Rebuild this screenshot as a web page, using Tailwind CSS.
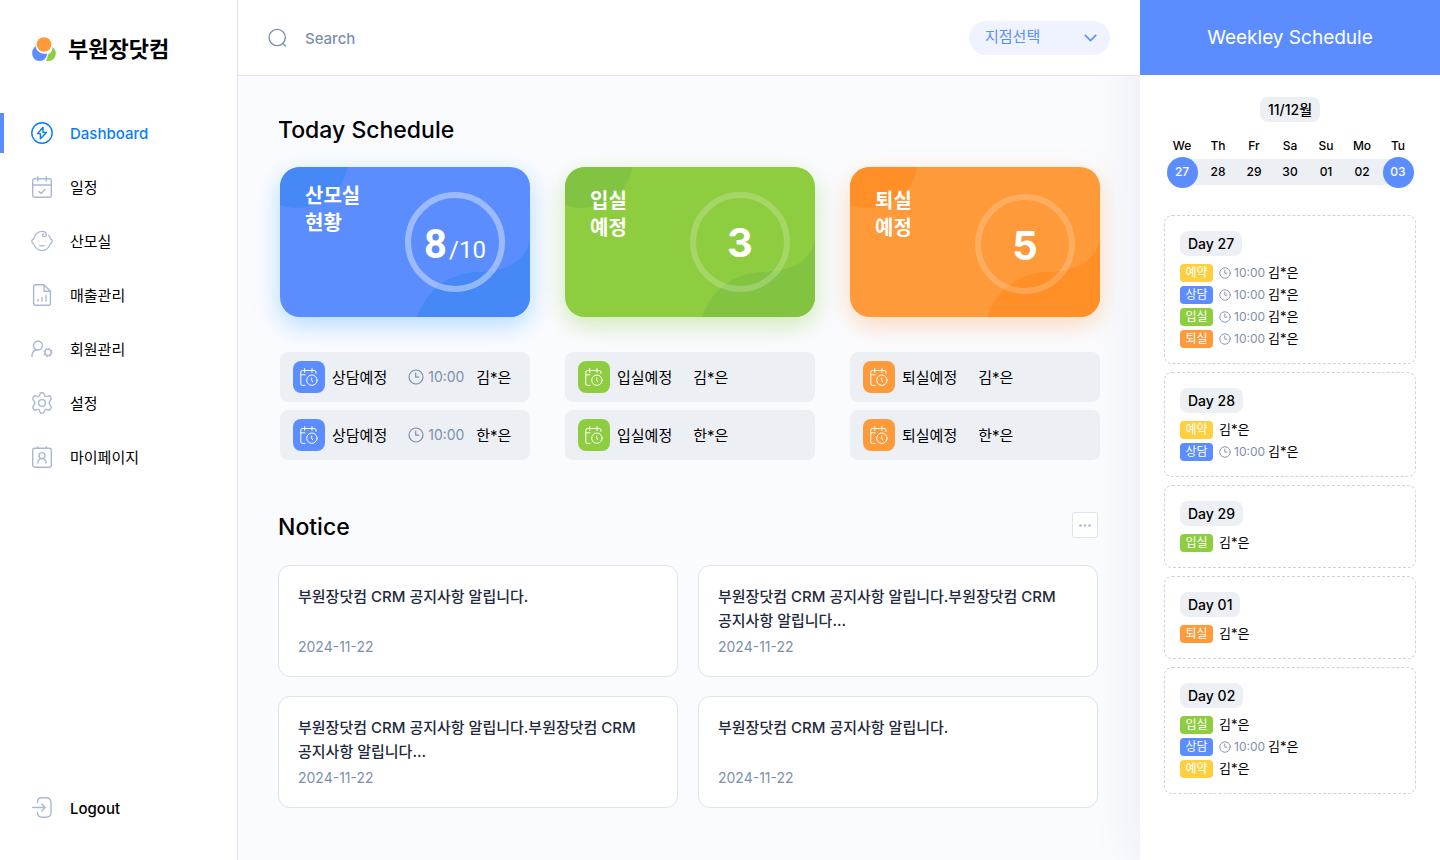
<!DOCTYPE html>
<html lang="ko">
<head>
<meta charset="utf-8">
<meta name="viewport" content="width=device-width, initial-scale=1">
<title>부원장닷컴</title>
<script src="https://cdn.jsdelivr.net/npm/@tailwindcss/browser@4"></script>
</head>
<body class="bg-white font-['Inter','Noto_Sans_CJK_KR',sans-serif] text-black antialiased">
<svg class="hidden" aria-hidden="true">
  <symbol id="clock" viewBox="0 0 16 16" fill="none" stroke="currentColor" stroke-width="1.2" stroke-linecap="round" stroke-linejoin="round"><circle cx="8" cy="8" r="7"/><path d="M7.700 4v4.200h3"/></symbol>
  <symbol id="calclock" viewBox="0 0 18 18" fill="none" stroke="currentColor" stroke-linecap="round" stroke-linejoin="round"><path d="M5 17.400H2.300Q.8 17.400 .8 15.900V4Q.8 2.500 2.300 2.500H14.200Q16 2.500 16 4V5.500M.8 6.800H5M4.700.6V4.300M12 .6V4.300"/><circle cx="11.900" cy="12.200" r="5.200"/><path d="M11.700 10v2.200l.9 1.600"/></symbol>
  <symbol id="blob" viewBox="0 0 250 150" preserveAspectRatio="none"><path fill="currentColor" d="M0 0H67C65 22 44 41 15 41Q7 41 0 38ZM137 150C146 124 168 105 200 105C204 105 206 104 211 104C236 101 250 86 250 68V150Z"/></symbol>
</svg>

<div class="flex min-h-screen">
  <aside class="flex w-[238px] shrink-0 flex-col border-r border-[#dfe3ee] pb-8">
    <a href="#" class="mt-[29px] flex h-10 items-center gap-3 pl-8">
      <svg class="size-6" viewBox="0 0 24 24" aria-hidden="true"><path d="M20.600 10.200C23 12 24 14.500 23.800 16.800C23.400 21 20.500 24 16.500 24Q15 24 14 23.400C15.400 21.500 15.800 19.500 15.800 17.500C18.400 16.600 20.400 14 20.600 10.200Z" fill="#8fcd40"/><path d="M3.700 9C.6 11.500 0 14 .2 17C.6 21 3.500 24 7.500 24C11.700 24 15 21 15 16.500Q13.500 17 11.500 16.700C6.800 16 4 13 3.700 9Z" fill="#5b8dff"/><circle cx="12" cy="7.500" r="7.300" fill="#ff9a3a"/></svg>
      <span class="text-[22px] font-bold">부원장닷컴</span>
    </a>
    <nav class="mt-11 flex flex-1 flex-col gap-[14px] text-[15px]">
      <a href="#" class="flex h-10 items-center gap-[17px] border-l-4 border-[#5b8dff] pl-[27px] font-medium text-[#0a7cff]">
        <svg class="size-[22px]" viewBox="0 0 22 22" fill="none" stroke="currentColor" stroke-width="1.400" stroke-linejoin="round"><circle cx="11" cy="11" r="10.200"/><path d="M12 5.200 6.600 11.600H9.400V16.800L15.400 10.400H12Z"/></svg><span class="pt-[2px]">Dashboard</span></a>
      <a href="#" class="flex h-10 items-center gap-[17px] pl-[31px]">
        <svg class="size-[22px] text-[#a9b9d4]" viewBox="0 0 22 22" fill="none" stroke="currentColor" stroke-width="1.400" stroke-linecap="round" stroke-linejoin="round"><rect x="1.700" y="2.700" width="18.600" height="18.600" rx="2"/><path d="M1.700 9H20.300M6.800.7V5M15.200.7V5M7.800 15.400l2.200 2 4-4"/></svg><span class="pt-[2px]">일정</span></a>
      <a href="#" class="flex h-10 items-center gap-[17px] pl-[31px]">
        <svg class="size-[22px] text-[#a9b9d4]" viewBox="0 0 22 22" fill="none" stroke="currentColor" stroke-width="1.300" stroke-linecap="round" stroke-linejoin="round"><path d="M17.600 5.200Q18.800 6.700 19.300 8.600Q21.300 9.700 21.300 11.300T19.300 13.900C17.800 18.200 14.600 20.600 11 20.600S4.200 18.200 2.700 13.900Q.7 12.900.7 11.300T2.700 8.600C4.200 4 7.300 1.400 11 1.400C16 1.200 16.600 6.800 13 6.800C10.700 6.800 10.700 4 12.700 4M8.800 15.400Q11 16.600 13.200 15.400"/><path d="M7.700 11.200v.1M14.300 11.200v.1" stroke-opacity=".6"/></svg><span class="pt-[2px]">산모실</span></a>
      <a href="#" class="flex h-10 items-center gap-[17px] pl-[31px]">
        <svg class="size-[22px] text-[#a9b9d4]" viewBox="0 0 22 22" fill="none" stroke="currentColor" stroke-width="1.400" stroke-linecap="round" stroke-linejoin="round"><path d="M13 .8H4.500Q2.600.8 2.600 2.700V19.300Q2.600 21.200 4.500 21.200H17.500Q19.400 21.200 19.400 19.300V7.200ZM13 .8V7.200H19.400M7 15.500V17M11 13.500V17M15 11.500V17"/></svg><span class="pt-[2px]">매출관리</span></a>
      <a href="#" class="flex h-10 items-center gap-[17px] pl-[31px]">
        <svg class="size-[22px] text-[#a9b9d4]" viewBox="0 0 22 22" fill="none" stroke="currentColor" stroke-width="1.400" stroke-linecap="round"><circle cx="7" cy="7.600" r="4.400"/><path d="M.9 18.500C1 14.500 3 12 6 12"/><circle cx="17" cy="14.500" r="3.100"/><circle cx="17" cy="14.500" r="4" stroke-width="1.200" stroke-dasharray="1.600 1.541" stroke-linecap="butt"/></svg><span class="pt-[2px]">회원관리</span></a>
      <a href="#" class="flex h-10 items-center gap-[17px] pl-[31px]">
        <svg class="size-[22px] text-[#a9b9d4]" viewBox="0 0 22 22" fill="none" stroke="currentColor" stroke-width="1.400" stroke-linejoin="round"><circle cx="11" cy="11" r="3.400"/><path d="M8.800 2.400Q9.100.8 10.500.8H11.500Q12.900.8 13.200 2.400Q13.500 4.400 15 4.600Q15.700 4.700 17 4Q18.400 3.300 19.200 4.500L20 5.900Q20.700 7.100 19.500 8.200C17.800 9.700 17.800 12.300 19.500 13.800Q20.700 14.900 20 16.100L19.200 17.500Q18.400 18.700 17 18Q15.700 17.300 15 17.400Q13.500 17.600 13.200 19.600Q12.900 21.200 11.500 21.200H10.500Q9.100 21.200 8.800 19.600Q8.500 17.600 7 17.400Q6.300 17.300 5 18Q3.600 18.700 2.800 17.500L2 16.100Q1.300 14.900 2.500 13.800C4.200 12.300 4.200 9.700 2.500 8.200Q1.300 7.100 2 5.900L2.800 4.500Q3.600 3.300 5 4Q6.300 4.700 7 4.600Q8.500 4.400 8.800 2.400Z"/></svg><span class="pt-[2px]">설정</span></a>
      <a href="#" class="flex h-10 items-center gap-[17px] pl-[31px]">
        <svg class="size-[22px] text-[#a9b9d4]" viewBox="0 0 22 22" fill="none" stroke="currentColor" stroke-width="1.400" stroke-linecap="round" stroke-linejoin="round"><rect x="1.700" y="2.200" width="18.600" height="19" rx="2"/><path d="M6.800.7V2.200M15.200.7V2.200M7 17C7 13.800 8.700 12.600 11 12.600S15 13.800 15 17"/><circle cx="11" cy="9.600" r="3"/></svg><span class="pt-[2px]">마이페이지</span></a>
    </nav>
    <a href="#" class="flex h-10 items-center gap-[17px] pl-[31px] text-[15px] font-medium">
      <svg class="size-[22px] text-[#a9b9d4]" viewBox="0 0 22 22" fill="none" stroke="currentColor" stroke-width="1.400" stroke-linecap="round" stroke-linejoin="round"><path d="M6.500 5.500Q6.500.8 11 .8H15Q20 .8 20 5.800V15.200Q20 20.200 15 20.200H11Q6.500 20.200 6.500 15.800M1.600 10.500H14M10.700 7l3.500 3.500-3.500 3.500"/></svg><span class="pt-[2px]">Logout</span></a>
  </aside>

  <div class="flex min-w-0 flex-1 flex-col bg-[#fafbff]">
    <header class="relative z-20 flex h-[76px] items-center justify-between border-b border-[#e1e3ea] bg-white px-[30px]">
      <label class="flex flex-1 items-center gap-[18px] text-[#7d8fad]">
        <svg class="size-5" viewBox="0 0 20 20" fill="none" stroke="currentColor" stroke-width="1.400" stroke-linecap="round" aria-hidden="true"><circle cx="9.700" cy="9.500" r="8.600"/><path d="m16 16 2.500 2.500"/></svg>
        <input type="search" aria-label="Search" placeholder="Search" class="h-10 w-full bg-transparent pt-[2px] text-[15px] font-medium outline-none placeholder:text-[#7d8fad]">
      </label>
      <div class="relative">
        <select aria-label="지점선택" class="h-[34px] w-[141px] appearance-none rounded-full bg-[#eff3ff] px-4 text-[15px] text-[#5b8dff]"><option>지점선택</option></select>
        <svg class="pointer-events-none absolute top-[13px] right-[13px] h-2 w-[13px] text-[#5b8dff]" viewBox="0 0 13 8" fill="none" stroke="currentColor" stroke-width="1.600"><path d="m.8.900 5.700 5.700L12.200.900"/></svg>
      </div>
    </header>

    <main class="px-10 pt-9 pb-12">
      <h1 class="text-[23px] leading-9 font-medium">Today Schedule</h1>
      <div class="mt-[19px] grid grid-cols-3 gap-[35px] pl-[2px]">
        <section class="flex flex-col gap-2">
          <div class="relative mb-[27px] flex h-[150px] justify-between overflow-hidden rounded-[20px] bg-[#5b8dff] px-[25px] text-white shadow-[0_8px_24px_rgba(70,170,255,0.4)]"><svg class="absolute inset-0 size-full text-[#4788f7]" aria-hidden="true"><use href="#blob"/></svg>
            <h2 class="relative pt-4 text-xl leading-[27px] font-bold">산모실<br>현황</h2>
            <div class="relative mt-[25px] flex size-[100px] items-baseline justify-center gap-[2px] rounded-full border-6 border-white/40 pt-[21px] font-[Roboto] text-[40px] leading-[52px] font-bold">8<span class="text-2xl font-normal">/10</span></div>
          </div>
          <div class="flex h-[50px] items-center rounded-lg bg-[#eceff4] px-[13px] text-[15px]">
            <span class="mr-[7px] flex size-8 items-center justify-center rounded-lg bg-[#5b8dff] text-white"><svg class="size-[18px]" aria-hidden="true"><use href="#calclock"/></svg></span>
            <span class="pt-[2px]">상담예정</span>
            <svg class="mr-1 ml-[21px] size-4 text-[#7d8fad]" aria-hidden="true"><use href="#clock"/></svg><time class="w-12 text-sm text-[#7d8fad]">10:00</time>
            <span class="pt-[2px]">김*은</span>
          </div>
          <div class="flex h-[50px] items-center rounded-lg bg-[#eceff4] px-[13px] text-[15px]">
            <span class="mr-[7px] flex size-8 items-center justify-center rounded-lg bg-[#5b8dff] text-white"><svg class="size-[18px]" aria-hidden="true"><use href="#calclock"/></svg></span>
            <span class="pt-[2px]">상담예정</span>
            <svg class="mr-1 ml-[21px] size-4 text-[#7d8fad]" aria-hidden="true"><use href="#clock"/></svg><time class="w-12 text-sm text-[#7d8fad]">10:00</time>
            <span class="pt-[2px]">한*은</span>
          </div>
        </section>
        <section class="flex flex-col gap-2">
          <div class="relative mb-[27px] flex h-[150px] justify-between overflow-hidden rounded-[20px] bg-[#8fcd40] px-[25px] text-white shadow-[0_8px_24px_rgba(143,205,64,0.4)]"><svg class="absolute inset-0 size-full text-[#82c341]" aria-hidden="true"><use href="#blob"/></svg>
            <h2 class="relative pt-[21px] text-xl leading-[27px] font-bold">입실<br>예정</h2>
            <div class="relative mt-[25px] flex size-[100px] items-baseline justify-center rounded-full border-6 border-white/20 pt-[19px] text-[40px] leading-[52px] font-bold">3</div>
          </div>
          <div class="flex h-[50px] items-center rounded-lg bg-[#eceff4] px-[13px] text-[15px]">
            <span class="mr-[7px] flex size-8 items-center justify-center rounded-lg bg-[#8fcd40] text-white"><svg class="size-[18px]" aria-hidden="true"><use href="#calclock"/></svg></span>
            <span class="mr-[21px] pt-[2px]">입실예정</span><span class="pt-[2px]">김*은</span>
          </div>
          <div class="flex h-[50px] items-center rounded-lg bg-[#eceff4] px-[13px] text-[15px]">
            <span class="mr-[7px] flex size-8 items-center justify-center rounded-lg bg-[#8fcd40] text-white"><svg class="size-[18px]" aria-hidden="true"><use href="#calclock"/></svg></span>
            <span class="mr-[21px] pt-[2px]">입실예정</span><span class="pt-[2px]">한*은</span>
          </div>
        </section>
        <section class="flex flex-col gap-2">
          <div class="relative mb-[27px] flex h-[150px] justify-between overflow-hidden rounded-[20px] bg-[#ff9a3a] px-[25px] text-white shadow-[0_8px_24px_rgba(255,154,58,0.35)]"><svg class="absolute inset-0 size-full text-[#ff8f26]" aria-hidden="true"><use href="#blob"/></svg>
            <h2 class="relative pt-[21px] text-xl leading-[27px] font-bold">퇴실<br>예정</h2>
            <div class="relative mt-[27px] flex size-[100px] items-baseline justify-center rounded-full border-6 border-white/20 pt-5 text-[40px] leading-[52px] font-bold">5</div>
          </div>
          <div class="flex h-[50px] items-center rounded-lg bg-[#eceff4] px-[13px] text-[15px]">
            <span class="mr-[7px] flex size-8 items-center justify-center rounded-lg bg-[#ff9a3a] text-white"><svg class="size-[18px]" aria-hidden="true"><use href="#calclock"/></svg></span>
            <span class="mr-[21px] pt-[2px]">퇴실예정</span><span class="pt-[2px]">김*은</span>
          </div>
          <div class="flex h-[50px] items-center rounded-lg bg-[#eceff4] px-[13px] text-[15px]">
            <span class="mr-[7px] flex size-8 items-center justify-center rounded-lg bg-[#ff9a3a] text-white"><svg class="size-[18px]" aria-hidden="true"><use href="#calclock"/></svg></span>
            <span class="mr-[21px] pt-[2px]">퇴실예정</span><span class="pt-[2px]">한*은</span>
          </div>
        </section>
      </div>

      <div class="mt-12 flex items-center justify-between pt-[1px] pr-[2px]">
        <h2 class="text-[23px] leading-9 font-medium">Notice</h2>
        <button type="button" aria-label="More notices" class="mb-1 flex size-[26px] items-center justify-center rounded-[3px] border border-[#e1e3ea] bg-white text-[#a9b9d4]"><svg class="h-[3px] w-3" viewBox="0 0 12 3" fill="currentColor"><circle cx="1.500" cy="1.500" r="1.300"/><circle cx="6" cy="1.500" r="1.300"/><circle cx="10.500" cy="1.500" r="1.300"/></svg></button>
      </div>
      <div class="mt-5 grid grid-cols-2 gap-x-5 gap-y-[19px] pr-[2px] break-keep">
        <article class="flex h-28 flex-col justify-between rounded-xl border border-[#e1e3ea] bg-white px-[19px] pt-[19px] pb-[19px]"><h3 class="text-[15px] leading-6 font-medium text-[#1f2a3d]">부원장닷컴 CRM 공지사항 알립니다.</h3><time class="text-sm text-[#7d8fad]">2024-11-22</time></article>
        <article class="flex h-28 flex-col justify-between rounded-xl border border-[#e1e3ea] bg-white px-[19px] pt-[19px] pb-[19px]"><h3 class="text-[15px] leading-6 font-medium text-[#1f2a3d]">부원장닷컴 CRM 공지사항 알립니다.부원장닷컴 CRM 공지사항 알립니다...</h3><time class="text-sm text-[#7d8fad]">2024-11-22</time></article>
        <article class="flex h-28 flex-col justify-between rounded-xl border border-[#e1e3ea] bg-white px-[19px] pt-[19px] pb-[19px]"><h3 class="text-[15px] leading-6 font-medium text-[#1f2a3d]">부원장닷컴 CRM 공지사항 알립니다.부원장닷컴 CRM 공지사항 알립니다...</h3><time class="text-sm text-[#7d8fad]">2024-11-22</time></article>
        <article class="flex h-28 flex-col justify-between rounded-xl border border-[#e1e3ea] bg-white px-[19px] pt-[19px] pb-[19px]"><h3 class="text-[15px] leading-6 font-medium text-[#1f2a3d]">부원장닷컴 CRM 공지사항 알립니다.</h3><time class="text-sm text-[#7d8fad]">2024-11-22</time></article>
      </div>
    </main>
  </div>

  <aside class="relative z-10 w-[300px] shrink-0 bg-white shadow-[0_0_50px_rgba(30,40,80,0.08)]">
    <h2 class="flex h-[75px] items-center justify-center bg-[#5b8dff] pt-[2px] text-[19px] text-white">Weekley Schedule</h2>
    <div class="px-6 pt-[22px]">
      <p class="mx-auto flex h-[25px] w-fit items-center rounded-lg bg-[#eceff4] px-2 text-sm font-medium">11/12월</p>
      <div class="mt-4 grid grid-cols-7 text-center text-xs leading-4 font-medium"><span>We</span><span>Th</span><span>Fr</span><span>Sa</span><span>Su</span><span>Mo</span><span>Tu</span></div>
      <div class="relative mt-[2px] grid h-8 grid-cols-7 place-items-center text-xs font-medium before:absolute before:inset-x-[18px] before:h-[26px] before:bg-[#eceff4]">
        <button type="button" class="relative size-[31px] rounded-full bg-[#5b8dff] text-white">27</button>
        <button type="button" class="relative">28</button>
        <button type="button" class="relative">29</button>
        <button type="button" class="relative">30</button>
        <button type="button" class="relative">01</button>
        <button type="button" class="relative">02</button>
        <button type="button" class="relative size-[31px] rounded-full bg-[#5b8dff] text-white">03</button>
      </div>

      <div class="mt-[27px] flex flex-col gap-2 pb-8 text-[13px]">
        <section class="flex flex-col gap-1 rounded-lg border border-dashed border-[#cdd3e0] p-[15px]">
          <h3 class="mb-1 flex h-[25px] w-fit items-center rounded-lg bg-[#eceff4] px-2 text-sm font-medium">Day 27</h3>
          <p class="flex h-[18px] items-center gap-[3px]"><span class="mr-[3px] flex h-[18px] w-[33px] items-center justify-center rounded bg-[#ffcf40] text-xs text-white">예약</span><svg class="size-3 text-[#7d8fad]" aria-hidden="true"><use href="#clock"/></svg><time class="text-xs text-[#7d8fad]">10:00</time>김*은</p>
          <p class="flex h-[18px] items-center gap-[3px]"><span class="mr-[3px] flex h-[18px] w-[33px] items-center justify-center rounded bg-[#5b8dff] text-xs text-white">상담</span><svg class="size-3 text-[#7d8fad]" aria-hidden="true"><use href="#clock"/></svg><time class="text-xs text-[#7d8fad]">10:00</time>김*은</p>
          <p class="flex h-[18px] items-center gap-[3px]"><span class="mr-[3px] flex h-[18px] w-[33px] items-center justify-center rounded bg-[#8fcd40] text-xs text-white">입실</span><svg class="size-3 text-[#7d8fad]" aria-hidden="true"><use href="#clock"/></svg><time class="text-xs text-[#7d8fad]">10:00</time>김*은</p>
          <p class="flex h-[18px] items-center gap-[3px]"><span class="mr-[3px] flex h-[18px] w-[33px] items-center justify-center rounded bg-[#ff9a3a] text-xs text-white">퇴실</span><svg class="size-3 text-[#7d8fad]" aria-hidden="true"><use href="#clock"/></svg><time class="text-xs text-[#7d8fad]">10:00</time>김*은</p>
        </section>
        <section class="flex flex-col gap-1 rounded-lg border border-dashed border-[#cdd3e0] p-[15px]">
          <h3 class="mb-1 flex h-[25px] w-fit items-center rounded-lg bg-[#eceff4] px-2 text-sm font-medium">Day 28</h3>
          <p class="flex h-[18px] items-center gap-[3px]"><span class="mr-[3px] flex h-[18px] w-[33px] items-center justify-center rounded bg-[#ffcf40] text-xs text-white">예약</span>김*은</p>
          <p class="flex h-[18px] items-center gap-[3px]"><span class="mr-[3px] flex h-[18px] w-[33px] items-center justify-center rounded bg-[#5b8dff] text-xs text-white">상담</span><svg class="size-3 text-[#7d8fad]" aria-hidden="true"><use href="#clock"/></svg><time class="text-xs text-[#7d8fad]">10:00</time>김*은</p>
        </section>
        <section class="flex flex-col gap-1 rounded-lg border border-dashed border-[#cdd3e0] p-[15px]">
          <h3 class="mb-1 flex h-[25px] w-fit items-center rounded-lg bg-[#eceff4] px-2 text-sm font-medium">Day 29</h3>
          <p class="flex h-[18px] items-center gap-[3px]"><span class="mr-[3px] flex h-[18px] w-[33px] items-center justify-center rounded bg-[#8fcd40] text-xs text-white">입실</span>김*은</p>
        </section>
        <section class="flex flex-col gap-1 rounded-lg border border-dashed border-[#cdd3e0] p-[15px]">
          <h3 class="mb-1 flex h-[25px] w-fit items-center rounded-lg bg-[#eceff4] px-2 text-sm font-medium">Day 01</h3>
          <p class="flex h-[18px] items-center gap-[3px]"><span class="mr-[3px] flex h-[18px] w-[33px] items-center justify-center rounded bg-[#ff9a3a] text-xs text-white">퇴실</span>김*은</p>
        </section>
        <section class="flex flex-col gap-1 rounded-lg border border-dashed border-[#cdd3e0] p-[15px]">
          <h3 class="mb-1 flex h-[25px] w-fit items-center rounded-lg bg-[#eceff4] px-2 text-sm font-medium">Day 02</h3>
          <p class="flex h-[18px] items-center gap-[3px]"><span class="mr-[3px] flex h-[18px] w-[33px] items-center justify-center rounded bg-[#8fcd40] text-xs text-white">입실</span>김*은</p>
          <p class="flex h-[18px] items-center gap-[3px]"><span class="mr-[3px] flex h-[18px] w-[33px] items-center justify-center rounded bg-[#5b8dff] text-xs text-white">상담</span><svg class="size-3 text-[#7d8fad]" aria-hidden="true"><use href="#clock"/></svg><time class="text-xs text-[#7d8fad]">10:00</time>김*은</p>
          <p class="flex h-[18px] items-center gap-[3px]"><span class="mr-[3px] flex h-[18px] w-[33px] items-center justify-center rounded bg-[#ffcf40] text-xs text-white">예약</span>김*은</p>
        </section>
      </div>
    </div>
  </aside>
</div>
</body>
</html>
